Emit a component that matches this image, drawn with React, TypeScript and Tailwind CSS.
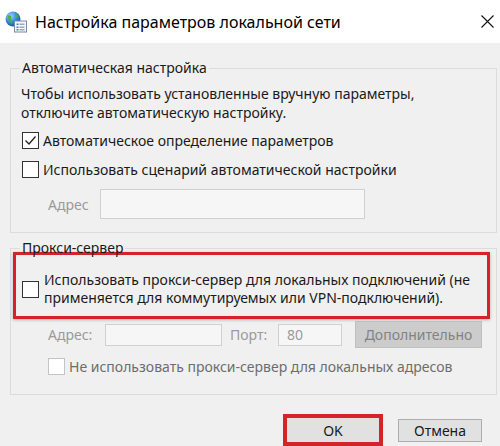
import React from 'react';

const Check = ({ checked = false, disabled = false }: { checked?: boolean; disabled?: boolean }) => (
    <span
        className={`flex h-[17px] w-[17px] shrink-0 items-center justify-center border bg-white ${
            disabled ? 'border-[#c4c4c4]' : 'border-[#333333]'
        }`}
    >
        {checked && (
            <svg width="13" height="13" viewBox="0 0 13 13">
                <path d="M1.5 6.5 L5 10 L11.5 2.5" fill="none" stroke="#222" strokeWidth="1.3" />
            </svg>
        )}
    </span>
);

const NetIcon = () => (
    <svg width="24" height="24" viewBox="0 0 24 24">
        <defs>
            <radialGradient id="g" cx="0.35" cy="0.3" r="0.8">
                <stop offset="0" stopColor="#8fd3ff" />
                <stop offset="0.6" stopColor="#2a7fd0" />
                <stop offset="1" stopColor="#1a4f94" />
            </radialGradient>
        </defs>
        <circle cx="9" cy="9" r="7.5" fill="url(#g)" />
        <path d="M4 6 C6 4 8 6 7 8 C6 10 9 11 8 14 C6 13 4 11 4 6 Z" fill="#4caf3f" />
        <path d="M11 3 C13 4 15 6 14 8 C12 8 11 6 11 3 Z" fill="#4caf3f" />
        <rect x="10.5" y="11" width="12" height="11" fill="#f4f7fb" stroke="#7a8aa3" strokeWidth="1" />
        <rect x="12.5" y="13.5" width="2" height="1.5" fill="#5a7bb0" />
        <rect x="15.5" y="13.5" width="5" height="1.5" fill="#9aaac4" />
        <rect x="12.5" y="16.5" width="2" height="1.5" fill="#5a7bb0" />
        <rect x="15.5" y="16.5" width="5" height="1.5" fill="#9aaac4" />
        <rect x="12.5" y="19" width="2" height="1.5" fill="#5a7bb0" />
        <rect x="15.5" y="19" width="5" height="1.5" fill="#9aaac4" />
    </svg>
);

const App = () => {
    return (
        <div
            className="h-[446px] w-[500px] overflow-hidden bg-[#f0f0f0] text-[14px] text-[#1a1a1a]"
            style={{ fontFamily: '"Noto Sans", "Open Sans", sans-serif' }}
        >
            <div className="flex h-[43px] items-center bg-white">
                <div className="ml-[4px]">
                    <NetIcon />
                </div>
                <span className="ml-[7px] text-[16px] leading-none text-black">Настройка параметров локальной сети</span>
                <svg className="ml-auto mr-[5px]" width="15" height="15" viewBox="0 0 15 15">
                    <path d="M1.5 1.5 L13.5 13.5 M13.5 1.5 L1.5 13.5" stroke="#111" strokeWidth="1.1" />
                </svg>
            </div>

            <div className="pt-[16px]">
                <fieldset className="ml-[10px] mr-[3px] border border-[#dcdcdc] pb-[13px]">
                    <legend className="ml-[9px] px-[2px] leading-[18px]">Автоматическая настройка</legend>
                    <p className="ml-[10px] mt-[7px] leading-[19px]">
                        Чтобы использовать установленные вручную параметры,
                        <br />
                        отключите автоматическую настройку.
                    </p>
                    <div className="ml-[11px] mt-[9px] flex h-[19px] items-center gap-[4px]">
                        <Check checked />
                        <span>Автоматическое определение параметров</span>
                    </div>
                    <div className="ml-[11px] mt-[10px] flex h-[19px] items-center gap-[4px]">
                        <Check />
                        <span>Использовать сценарий автоматической настройки</span>
                    </div>
                    <div className="mt-[10px] flex items-center">
                        <span className="ml-[37px] w-[52px] text-[#9a9a9a]">Адрес</span>
                        <div className="h-[30px] w-[265px] border border-[#d0d0d0] bg-[#f6f6f6]" />
                    </div>
                </fieldset>

                <fieldset className="ml-[10px] mr-[3px] mt-[6px] border border-[#dcdcdc] pb-[19px]">
                    <legend className="ml-[9px] px-[2px] leading-[18px]">Прокси-сервер</legend>
                    <div className="ml-[2px] mr-[6px] mt-[-5px] flex items-center gap-[5px] border-[3px] border-[#d6232b] pb-[9px] pl-[6px] pt-[16px] shadow-[0_1px_3px_rgba(0,0,0,0.25)]">
                        <Check />
                        <span className="leading-[18px]">
                            Использовать прокси-сервер для локальных подключений (не
                            <br />
                            применяется для коммутируемых или VPN-подключений).
                        </span>
                    </div>
                    <div className="mt-[2px] flex h-[27px] items-center text-[#9a9a9a]">
                        <span className="ml-[37px] w-[57px]">Адрес:</span>
                        <div className="h-[22px] w-[117px] border border-[#d0d0d0] bg-[#f6f6f6]" />
                        <span className="ml-[8px] w-[48px]">Порт:</span>
                        <div className="flex h-[22px] w-[64px] items-center border border-[#d0d0d0] bg-[#f6f6f6] pl-[8px]">
                            80
                        </div>
                        <div className="ml-[13px] flex h-[27px] w-[127px] items-center justify-center border border-[#bfbfbf] bg-[#cccccc] text-[#838383]">
                            Дополнительно
                        </div>
                    </div>
                    <div className="ml-[37px] mt-[10px] flex h-[17px] items-center gap-[4px] text-[#6d6d6d]">
                        <Check disabled />
                        <span>Не использовать прокси-сервер для локальных адресов</span>
                    </div>
                </fieldset>

                <div className="mr-[18px] mt-[19px] flex items-center justify-end gap-[15px]">
                    <div className="flex h-[32px] w-[100px] items-center justify-center border-[4px] border-[#d6232b] bg-[#e1e1e1]">
                        OK
                    </div>
                    <div className="flex h-[23px] w-[84px] items-center justify-center border border-[#adadad] bg-[#e1e1e1]">
                        Отмена
                    </div>
                </div>
            </div>
        </div>
    );
};

export default App;
